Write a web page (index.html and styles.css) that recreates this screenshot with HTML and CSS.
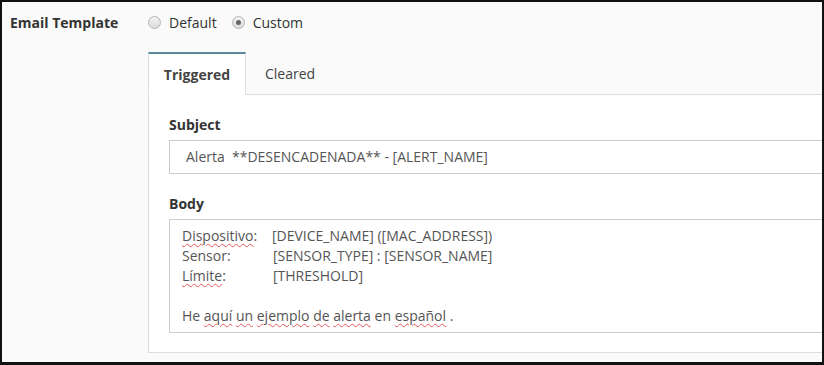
FILE: index.html
```html
<!DOCTYPE html>
<html lang="es">
<head>
    <meta charset="UTF-8">
    <title>Email Template</title>
    <link rel="stylesheet" href="styles.css">
</head>
<body>
    <div class="page">
        <div class="form-row">
            <div class="row-label">Email Template</div>
            <div class="row-field">
                <div class="radios">
                    <label class="radio-opt"><span class="radio"></span>Default</label>
                    <label class="radio-opt"><span class="radio checked"></span>Custom</label>
                </div>

                <div class="tabbox">
                    <ul class="tabs">
                        <li class="tab active">Triggered</li>
                        <li class="tab">Cleared</li>
                        <li class="tab-fill"></li>
                    </ul>
                    <div class="tab-panel">
                        <div class="field-label">Subject</div>
                        <div class="input">Alerta&nbsp; **DESENCADENADA** - [ALERT_NAME]</div>

                        <div class="field-label">Body</div>
                        <div class="textarea">
                            <div class="line"><span class="key"><span class="typo">Dispositivo</span>:</span>[DEVICE_NAME] ([MAC_ADDRESS])</div>
                            <div class="line"><span class="key key-b">Sensor:</span>[SENSOR_TYPE] : [SENSOR_NAME]</div>
                            <div class="line"><span class="key key-b"><span class="typo">Límite</span>:</span>[THRESHOLD]</div>
                            <div class="line">&nbsp;</div>
                            <div class="line">He <span class="typo">aquí</span> <span class="typo">un</span> <span class="typo">ejemplo</span> <span class="typo">de</span> <span class="typo">alerta</span> en <span class="typo">español</span> .</div>
                        </div>
                    </div>
                </div>
            </div>
        </div>
    </div>
</body>
</html>
```

FILE: styles.css
```css
html, body {
    margin: 0;
    height: 100%;
}
body {
    background-color: #111;
    padding: 2px 2px 3px 2px;
    box-sizing: border-box;
    font-family: "Open Sans", Arial, sans-serif;
    font-size: 14px;
    color: #333;
}
.page {
    background-color: #fafafa;
    height: 100%;
    overflow: hidden;
}
.form-row {
    display: flex;
}
.row-label {
    width: 138px;
    padding: 11px 0 0 8px;
    font-weight: bold;
    line-height: 19px;
}
.row-field {
    flex: 1;
    margin-right: -40px;
}
.radios {
    display: flex;
    align-items: flex-start;
    gap: 15px;
    height: 50px;
    padding-top: 11px;
    box-sizing: border-box;
    line-height: 19px;
}
.radio-opt {
    display: flex;
    align-items: center;
    gap: 8px;
}
.radio {
    width: 11px;
    height: 11px;
    border: 1px solid #b4b4b4;
    border-radius: 50%;
    background: linear-gradient(#f2f2f2, #dcdcdc);
    position: relative;
}
.radio.checked::after {
    content: "";
    position: absolute;
    left: 3px;
    top: 3px;
    width: 5px;
    height: 5px;
    border-radius: 50%;
    background-color: #666;
}

/* tabs */
.tabs {
    display: flex;
    list-style: none;
    margin: 0;
    padding: 0;
    height: 43px;
}
.tab {
    padding: 0 19px;
    display: flex;
    align-items: center;
    border-bottom: 1px solid #ddd;
    color: #444;
}
.tab.active {
    width: 98px;
    box-sizing: border-box;
    justify-content: center;
    background-color: #fff;
    border-top: 2px solid #5b8a9b;
    border-left: 1px solid #ddd;
    border-right: 1px solid #ddd;
    border-bottom-color: #fff;
    font-weight: bold;
    padding: 0;
}
.tab-fill {
    flex: 1;
    border-bottom: 1px solid #ddd;
}
.tab-panel {
    background-color: #fff;
    border-left: 1px solid #ddd;
    border-bottom: 1px solid #ddd;
    padding: 20px 0 19px 20px;
}
.field-label {
    font-weight: bold;
    line-height: 19px;
    margin-bottom: 6px;
}
.input {
    border: 1px solid #ccc;
    height: 32px;
    line-height: 32px;
    padding-left: 16px;
    color: #555;
    margin-bottom: 20px;
}
.textarea {
    border: 1px solid #ccc;
    padding: 6px 0 6px 12px;
    color: #555;
    line-height: 20px;
}
.key {
    display: inline-block;
    width: 90px;
}
.key-b {
    width: 91px;
}
.typo {
    text-decoration: underline wavy #e8585a;
    text-decoration-thickness: 1px;
    text-underline-offset: 2px;
}
```
